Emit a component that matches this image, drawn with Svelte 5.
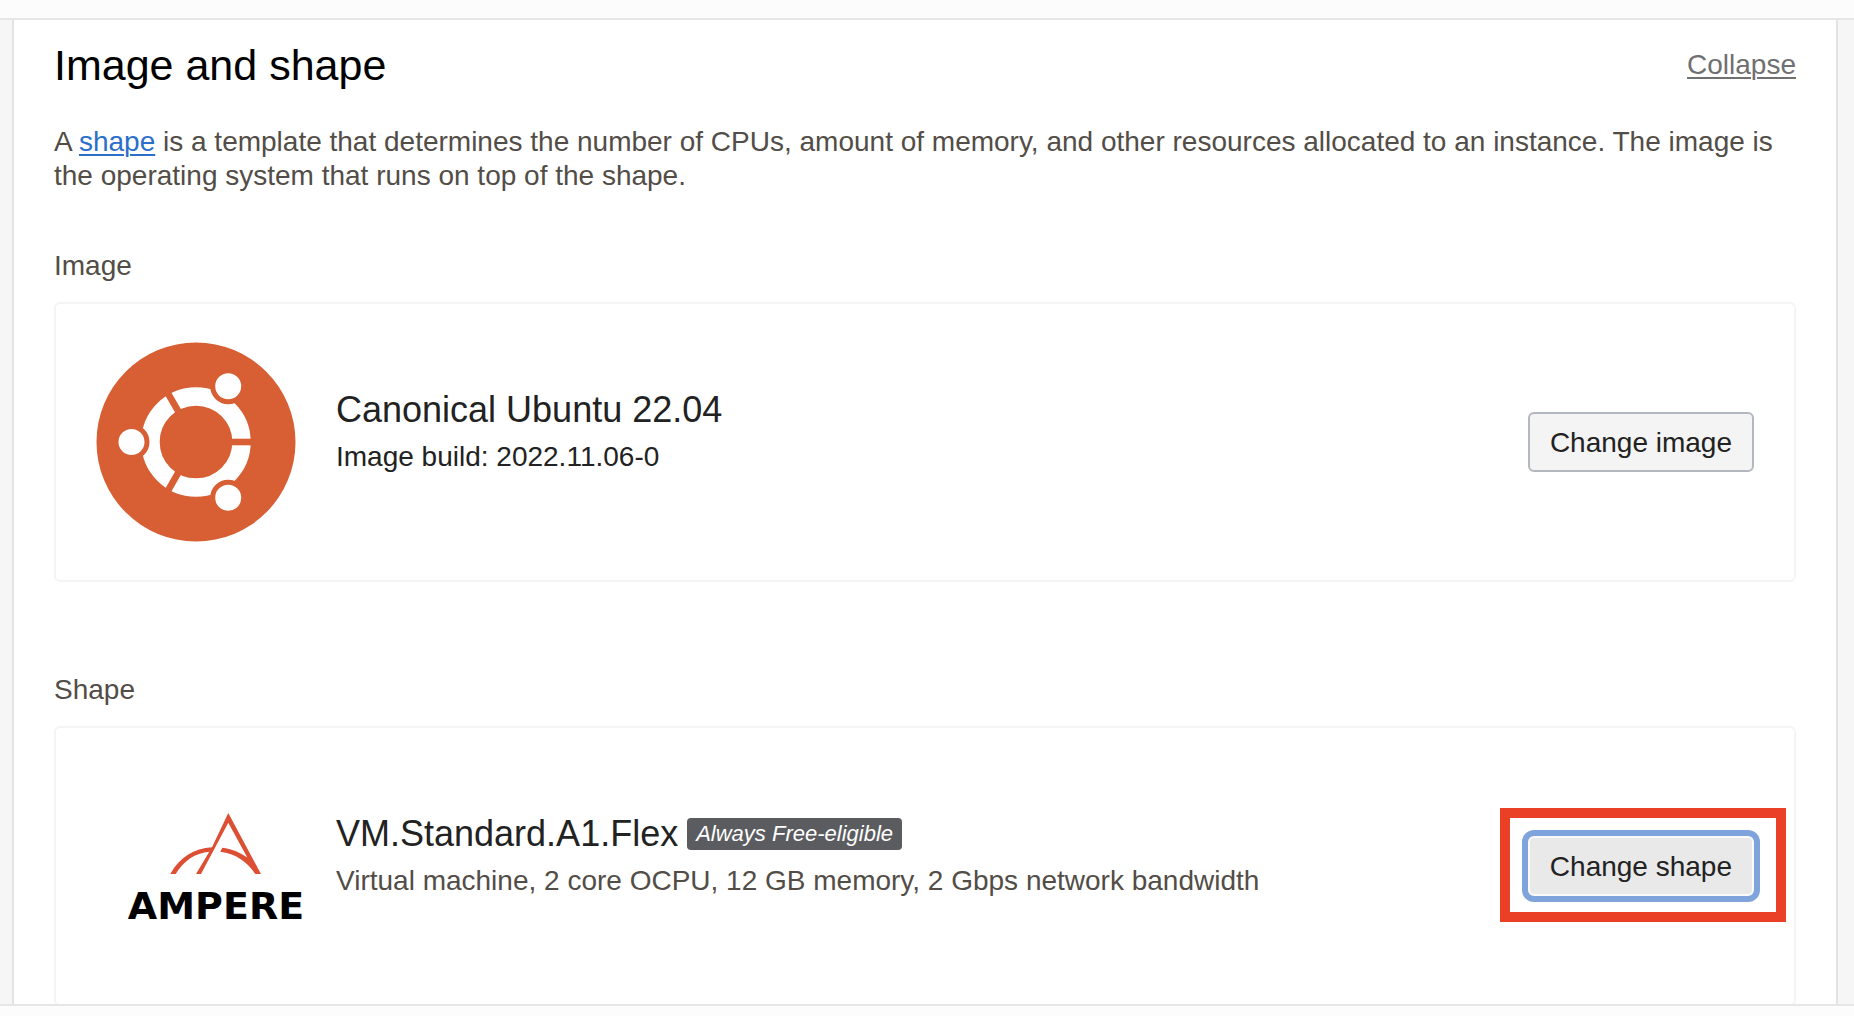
<script>
  const image = { name: 'Canonical Ubuntu 22.04', build: 'Image build: 2022.11.06-0' };
  const shape = {
    name: 'VM.Standard.A1.Flex',
    badge: 'Always Free-eligible',
    details: 'Virtual machine, 2 core OCPU, 12 GB memory, 2 Gbps network bandwidth'
  };
</script>

<div class="page">
  <div class="strip top"></div>
  <main class="viewport">
    <section class="panel">
      <header class="head">
        <h1>Image and shape</h1>
        <a class="collapse" href="#collapse">Collapse</a>
      </header>
      <p class="intro">
        A <a href="#shape">shape</a> is a template that determines the number of CPUs, amount of memory, and other resources allocated to an instance. The image is the operating system that runs on top of the shape.
      </p>

      <section class="group">
        <h2>Image</h2>
        <div class="card">
          <div class="logo">
            <svg class="ubuntu" viewBox="-100 -100 200 200" role="img" aria-label="Ubuntu">
              <circle r="99.5" fill="#d75f33" />
              <circle r="45.5" fill="none" stroke="#fff" stroke-width="18.4" />
              <g stroke="#d75f33" stroke-width="6.6">
                <path d="M30 0H60" />
                <path d="M-15 -26L-30 -52" />
                <path d="M-15 26L-30 52" />
              </g>
              <g fill="#fff" stroke="#d75f33" stroke-width="5">
                <circle cx="-64.5" cy="0" r="15.5" />
                <circle cx="32.2" cy="-55.8" r="15.5" />
                <circle cx="32.2" cy="55.8" r="15.5" />
              </g>
            </svg>
          </div>
          <div class="info">
            <div class="name">{image.name}</div>
            <div class="detail dark">{image.build}</div>
          </div>
          <button type="button">Change image</button>
        </div>
      </section>

      <section class="group">
        <h2 id="shape">Shape</h2>
        <div class="card">
          <div class="logo">
            <svg class="ampere" viewBox="0 0 200 106" role="img" aria-label="Ampere">
              <g fill="#dc4f32">
                <path d="M112.3 0L145 61H139.3C131 48.5 119.5 40.5 104.3 38.7L106.3 34.7C115.5 35.7 124 39.2 131.3 44.5L112.3 9.7L85 61H80L93.3 38.7C79 40 68 47.5 59.7 61H54.3C63.5 44.5 78 35 96 34.3Z" />
              </g>
              <text x="100" y="106" text-anchor="middle">AMPERE</text>
            </svg>
          </div>
          <div class="info">
            <div class="name">{shape.name}<span class="badge">{shape.badge}</span></div>
            <div class="detail">{shape.details}</div>
          </div>
          <div class="marked">
            <button type="button" class="focused">Change shape</button>
          </div>
        </div>
      </section>
    </section>
  </main>
  <div class="strip bottom"></div>
</div>

<style>
  :global(body) {
    margin: 0;
  }
  .page {
    display: flex;
    flex-direction: column;
    height: 100vh;
    background: #f6f6f6;
    color: #524d47;
    font-family: "Liberation Sans", Arial, sans-serif;
    font-size: 28px;
    line-height: 34px;
  }
  .strip {
    flex: none;
    background: #fcfcfc;
  }
  .top {
    height: 18px;
    border-bottom: 2px solid #e6e6e6;
  }
  .bottom {
    height: 10px;
    border-top: 2px solid #e6e6e6;
  }
  .viewport {
    flex: 1;
    min-height: 0;
    overflow: hidden;
    padding: 0 16px 0 12px;
  }
  .panel {
    padding: 20px 40px;
    background: #fff;
    border: solid #e2e3e7;
    border-width: 0 2px;
  }
  .head {
    display: flex;
    align-items: center;
    justify-content: space-between;
  }
  h1 {
    margin: 0;
    color: #000;
    font-size: 43px;
    font-weight: 400;
    line-height: 50px;
  }
  .collapse {
    color: #707070;
  }
  a {
    text-decoration-thickness: 2px;
    text-underline-offset: 3px;
  }
  .intro {
    margin: 35px 0 56px;
  }
  .intro a {
    color: #2b6fc9;
  }
  h2 {
    margin: 0 0 19px;
    font-size: 28px;
    font-weight: 400;
  }
  .group {
    margin-bottom: 91px;
  }
  .card {
    display: flex;
    align-items: center;
    box-sizing: border-box;
    min-height: 280px;
    padding: 38px 40px;
    border: 2px solid #f4f4f4;
    border-radius: 6px;
  }
  .logo {
    display: flex;
    flex: none;
    width: 240px;
  }
  .ubuntu {
    width: 200px;
    height: 200px;
  }
  .ampere {
    width: 200px;
    height: 106px;
    margin-left: 20px;
    overflow: visible;
  }
  .ampere text {
    font-family: "DejaVu Sans", sans-serif;
    font-size: 38px;
    font-weight: 700;
    fill: #000;
  }
  .info {
    display: flex;
    flex: 1;
    flex-direction: column;
    gap: 8px;
    padding-bottom: 22px;
  }
  .name {
    display: flex;
    align-items: center;
    gap: 9px;
    color: #222;
    font-size: 36px;
    line-height: 44px;
  }
  .dark {
    color: #222;
  }
  .badge {
    padding: 0 9px;
    border-radius: 4px;
    background: #5b5c60;
    color: #fff;
    font-size: 22px;
    font-style: italic;
    line-height: 32px;
  }
  button {
    padding: 12px 20px 10px;
    border: 2px solid #b3b8bf;
    border-radius: 6px;
    background: #f4f4f4;
    color: #222;
    font: inherit;
  }
  .focused {
    border-color: #fafafa;
    background: #e9e9e9;
    box-shadow: 0 0 0 6px #7fa4dc;
  }
  .marked {
    position: relative;
    display: flex;
  }
  .marked::after {
    position: absolute;
    inset: -28px -32px -26px -28px;
    border: 10px solid #ea4025;
    content: "";
    pointer-events: none;
  }
</style>
